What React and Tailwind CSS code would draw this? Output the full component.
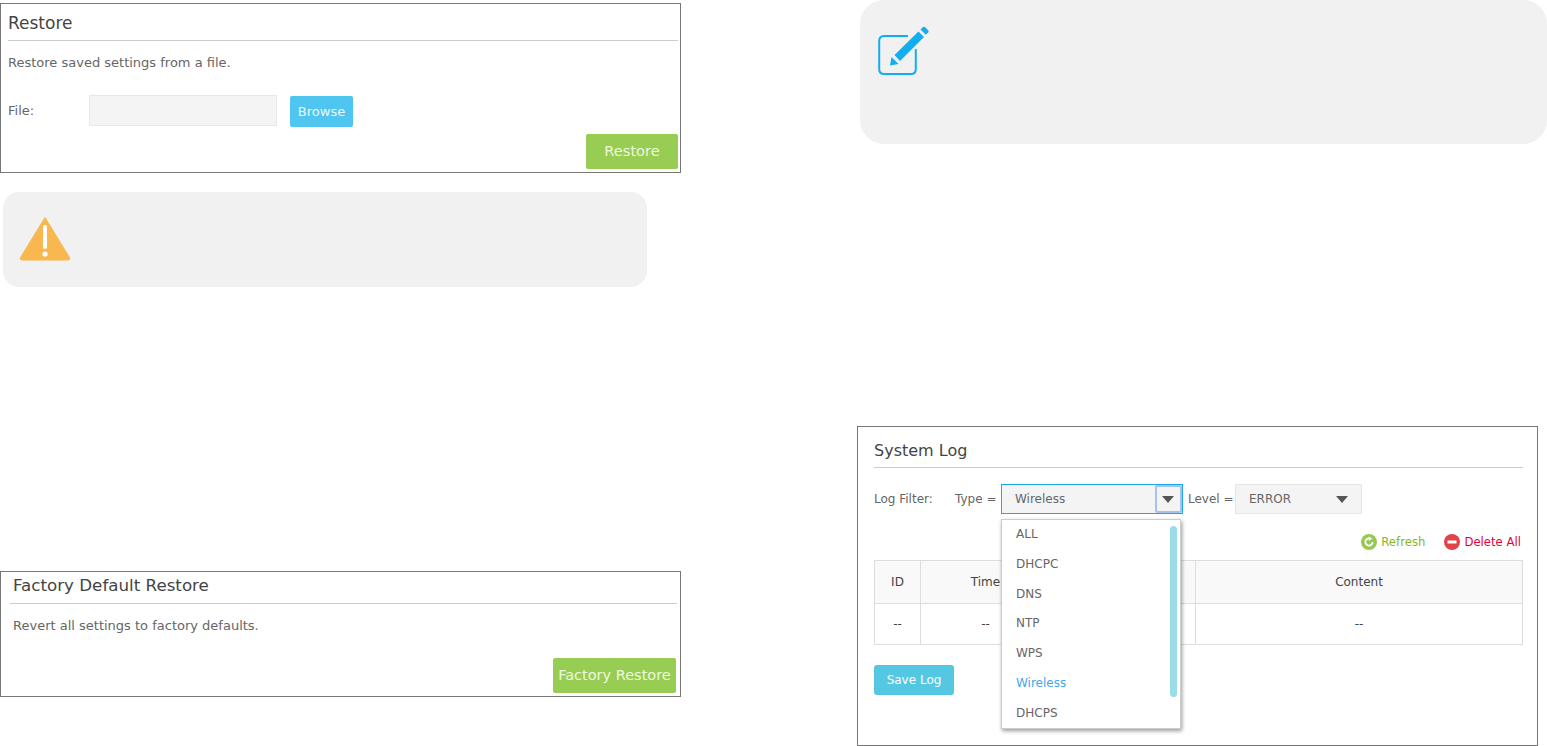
import React from 'react';

const font = { fontFamily: '"DejaVu Sans", sans-serif' };

function WarningIcon() {
  return (
    <svg width="52" height="45" viewBox="0 0 52 45" className="shrink-0">
      <path d="M26 1.5 L50.5 41.5 Q51.5 44 49 44 L3 44 Q0.5 44 1.5 41.5 Z" fill="#f9b84f" stroke="#f9b84f" strokeLinejoin="round" />
      <rect x="24" y="9" width="4" height="24" rx="2" fill="#fff" />
      <circle cx="26" cy="38" r="2.6" fill="#fff" />
    </svg>
  );
}

function NoteIcon() {
  return (
    <svg width="52" height="50" viewBox="0 0 52 50" className="shrink-0">
      <path d="M30 10 H6 Q1.2 10 1.2 15 V43 Q1.2 48 6 48 H33 Q37.800 48 37.800 43 V23" fill="none" stroke="#12aef0" strokeWidth="2" />
      <path d="M16.500 29 L40.500 5.500 L46 11 L22 35 Z" fill="#12aef0" />
      <path d="M13.500 31 L20.500 38 L12 39.500 Z" fill="#12aef0" />
      <path d="M42.500 3.500 L45 1 Q46 0.300 47 1 L50.300 4.500 Q51 5.500 50.300 6.300 L47.800 8.800 Z" fill="#12aef0" />
    </svg>
  );
}

function Arrow() {
  return <span className="block w-0 h-0 border-x-[6px] border-x-transparent border-t-[7px] border-t-[#555]" />;
}

const logTypes = ['ALL', 'DHCPC', 'DNS', 'NTP', 'WPS', 'Wireless', 'DHCPS'];

export default function App() {
  return (
    <div className="w-[1547px] h-[746px] overflow-hidden bg-white flex text-[#666]" style={font}>
      {/* Left column */}
      <div className="w-[681px] pt-[3px] shrink-0">
        <div className="h-[170px] border border-[#777] pl-[7px] pr-[2px] flex flex-col">
          <h2 className="h-[37px] pt-[5px] text-[17px] leading-[28px] text-[#444] border-b border-[#ccc]">Restore</h2>
          <p className="mt-[13px] text-[13px] leading-[18px]">Restore saved settings from a file.</p>
          <div className="mt-[23px] flex items-start h-[31px]">
            <span className="w-[81px] text-[13px] leading-[31px]">File:</span>
            <div className="w-[188px] h-[31px] bg-[#f4f4f4] border border-[#e8e8e8]" />
            <button className="ml-[13px] mt-[1px] w-[63px] h-[31px] pt-[1px] bg-[#4ec6f0] rounded-[2px] text-[#e8f8fe] text-[13px]">Browse</button>
          </div>
          <div className="mt-[8px] flex justify-end">
            <button className="w-[92px] h-[35px] pb-[1px] bg-[#98cd54] rounded-[2px] text-[#eef8df] text-[14.600px]">Restore</button>
          </div>
        </div>

        <div className="ml-[3px] mt-[19px] w-[644px] h-[95px] rounded-[16px] bg-[#f1f1f1] pl-[16px] pt-[24px]">
          <WarningIcon />
        </div>

        <div className="mt-[284px] h-[126px] border border-[#777] pl-[9px] pr-[3px] flex flex-col">
          <h2 className="h-[32px] pl-[3px] text-[16.700px] leading-[26px] text-[#444] border-b border-[#ccc]">Factory Default Restore</h2>
          <p className="mt-[13px] pl-[3px] text-[13px] leading-[18px]">Revert all settings to factory defaults.</p>
          <div className="mt-[23px] pr-[1px] flex justify-end">
            <button className="w-[123px] h-[35px] bg-[#98cd54] rounded-[2px] text-[#eef8df] text-[14.500px]">Factory Restore</button>
          </div>
        </div>
      </div>

      {/* Right column */}
      <div className="ml-[176px] w-[690px] shrink-0">
        <div className="ml-[3px] w-[687px] h-[144px] rounded-[24px] bg-[#f1f1f1] pl-[18px] pt-[26px]">
          <NoteIcon />
        </div>

        <div className="mt-[282px] w-[681px] h-[320px] border border-[#777] pl-[16px] pr-[14px]">
          <h2 className="h-[41px] pt-[13px] text-[16px] leading-[22px] text-[#444] border-b border-[#ccc]">System Log</h2>

          <div className="mt-[16px] h-[30px] flex items-center text-[12px]">
            <span className="w-[81px]">Log Filter:</span>
            <span className="w-[46px]">Type =</span>
            <div className="relative w-[182px] h-[30px] border border-[#1ba9e6] bg-[#f4f4f4] flex items-center justify-between">
              <span className="pl-[13px]">Wireless</span>
              <span className="w-[27px] h-[28px] border-2 border-[#a6c2f2] rounded-[2px] pr-[2px] flex items-center justify-center">
                <Arrow />
              </span>

              <div className="absolute -left-[1px] top-[34px] z-10 w-[180px] h-[210px] bg-white border border-[#ccc] shadow-[1px_2px_4px_rgba(0,0,0,0.4)]">
                <ul>
                  {logTypes.map((t) => (
                    <li key={t} className={`h-[29.800px] leading-[28.500px] pl-[14px] ${t === 'Wireless' ? 'text-[#3fa9e8]' : ''}`}>{t}</li>
                  ))}
                </ul>
                <span className="absolute right-[3px] top-[6px] w-[7px] h-[171px] rounded-[4px] bg-[#9bdcea]" />
              </div>
            </div>
            <span className="ml-[5px] w-[48px] -mr-[1px]">Level =</span>
            <div className="w-[127px] h-[30px] border border-[#e6e6e6] bg-[#f4f4f4] flex items-center justify-between pl-[13px] pr-[13px]">
              <span>ERROR</span>
              <Arrow />
            </div>
          </div>

          <div className="mt-[18px] h-[20px] flex items-center justify-end gap-[19px] pr-[2px] text-[11.700px]">
            <span className="flex items-center gap-[4px] text-[#8ab52d]">
              <svg width="16" height="16" viewBox="0 0 16 16">
                <circle cx="8" cy="8" r="8" fill="#97c952" />
                <path d="M11.600 8 A3.600 3.600 0 1 1 8.800 4.500" fill="none" stroke="#fff" strokeWidth="1.800" />
                <path d="M7.500 2.500 L11.300 4.500 L8 7 Z" fill="#fff" />
              </svg>
              <span className="pt-[1px]">Refresh</span>
            </span>
            <span className="flex items-center gap-[4px] text-[#e6003c]">
              <svg width="16" height="16" viewBox="0 0 16 16">
                <circle cx="8" cy="8" r="8" fill="#e24348" />
                <rect x="3.500" y="6.500" width="9" height="3" fill="#fff" />
              </svg>
              <span className="pt-[1px]">Delete All</span>
            </span>
          </div>

          <table className="mt-[8px] w-[649px] table-fixed border-collapse text-[12px] text-[#444] text-center">
            <colgroup>
              <col className="w-[46px]" />
              <col className="w-[130px]" />
              <col className="w-[72px]" />
              <col className="w-[73px]" />
              <col />
            </colgroup>
            <thead>
              <tr className="h-[43px] bg-[#f9f9f9]">
                {['ID', 'Time', 'Type', 'Level', 'Content'].map((h) => (
                  <th key={h} className="border border-[#ddd] font-normal">{h}</th>
                ))}
              </tr>
            </thead>
            <tbody>
              <tr className="h-[41px]">
                {[0, 1, 2, 3, 4].map((i) => (
                  <td key={i} className="border border-[#ddd]">--</td>
                ))}
              </tr>
            </tbody>
          </table>

          <button className="mt-[20px] w-[80px] h-[30px] pb-[1px] bg-[#54c8e3] rounded-[3px] text-white text-[12px]">Save Log</button>
        </div>
      </div>
    </div>
  );
}
